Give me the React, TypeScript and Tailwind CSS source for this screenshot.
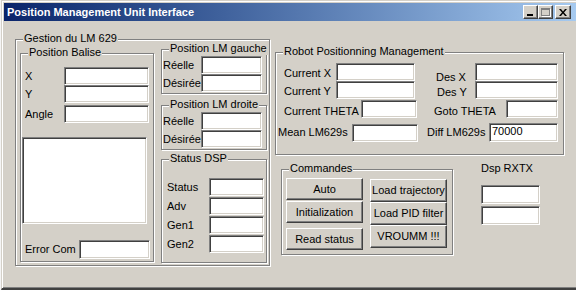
import type { ReactNode } from 'react';

// classic Win2000 dialog, MS Sans Serif approximated with Liberation Sans

function Group({ title, className, children }: { title: string; className: string; children?: ReactNode }) {
  return (
    <div className={`relative shrink-0 border border-[#808080] shadow-[inset_1px_1px_0_#fff,1px_1px_0_#fff] ${className}`}>
      <span className="absolute left-[7px] top-[-8px] bg-[#d4d0c8] px-[1px] leading-[13px] whitespace-nowrap">{title}</span>
      {children}
    </div>
  );
}

function Edit({ className, value }: { className: string; value?: string }) {
  return (
    <div
      className={`shrink-0 bg-white border border-[#808080] border-b-white border-r-white shadow-[inset_1px_1px_0_#404040,inset_-1px_-1px_0_#d4d0c8] pl-[2px] pt-[1px] leading-[13px] ${className}`}
    >
      {value}
    </div>
  );
}

function Btn({ label, className }: { label: string; className: string }) {
  return (
    <div
      className={`shrink-0 flex items-center justify-center bg-[#d4d0c8] border border-white border-b-[#404040] border-r-[#404040] shadow-[inset_-1px_-1px_0_#808080] leading-[13px] ${className}`}
    >
      {label}
    </div>
  );
}

function CapButton({ children, className }: { children: ReactNode; className: string }) {
  return (
    <div
      className={`flex items-center justify-center h-[14px] bg-[#d4d0c8] border border-white border-b-[#404040] border-r-[#404040] shadow-[inset_-1px_-1px_0_#808080] ${className}`}
    >
      {children}
    </div>
  );
}

export default function App() {
  return (
    <div className="flex w-[576px] h-[290px] overflow-hidden bg-[#f4f4f4] text-black text-[11px] font-['Liberation_Sans',Arial,sans-serif]">
      <div className="w-[1px] shrink-0" />
      <div className="w-[575px] h-[290px] shrink-0 bg-[#d4d0c8] border-t border-l border-[#d4d0c8] border-b-2 border-b-[#404040] shadow-[inset_1px_1px_0_#fff,inset_0_-1px_0_#808080] pl-[2px] pt-[2px] flex flex-col">
        {/* title bar */}
        <div className="h-[18px] flex items-center bg-gradient-to-r from-[#0a246a] to-[#a6caf0] pl-[3px] pr-[5px]">
          <span className="text-white font-bold leading-[13px] whitespace-nowrap">Position Management Unit Interface</span>
          <div className="ml-auto flex items-center">
            <CapButton className="w-[15px]">
              <div className="w-[6px] h-[2px] bg-black mt-[5px] mr-[1px]" />
            </CapButton>
            <CapButton className="w-[15px]">
              <div className="w-[9px] h-[8px] border border-[#808080] border-t-2 shadow-[1px_1px_0_#fff]" />
            </CapButton>
            <CapButton className="w-[16px] ml-[2px]">
              <svg width="8" height="7" viewBox="0 0 8 7">
                <path d="M0 0h2l2 2.5L6 0h2L5 3.5 8 7H6L4 4.5 2 7H0l3-3.5z" fill="#000" />
              </svg>
            </CapButton>
          </div>
        </div>

        {/* body */}
        <div className="flex items-start pl-[11px] pt-[18px]">
          <Group title="Gestion du LM 629" className="w-[255px] h-[227px]">
            <div className="flex items-start pl-[4px] pt-[9px]">
              <Group title="Position Balise" className="mt-[4px] w-[134px] h-[209px]">
                <div className="flex flex-col pt-[13px]">
                  <div className="flex items-center h-[18px] pl-[4px]">
                    <span className="w-[39px]">X</span>
                    <Edit className="w-[85px] h-[18px]" />
                  </div>
                  <div className="flex items-center h-[18px] pl-[4px]">
                    <span className="w-[39px]">Y</span>
                    <Edit className="w-[85px] h-[18px]" />
                  </div>
                  <div className="flex items-center h-[18px] mt-[2px] pl-[4px]">
                    <span className="w-[39px]">Angle</span>
                    <Edit className="w-[85px] h-[18px]" />
                  </div>
                  <Edit className="ml-[1px] mt-[14px] w-[125px] h-[87px]" />
                  <div className="flex items-center h-[19px] mt-[16px] pl-[4px]">
                    <span className="w-[54px] whitespace-nowrap">Error Com</span>
                    <Edit className="w-[71px] h-[19px]" />
                  </div>
                </div>
              </Group>

              <div className="ml-[7px] flex flex-col w-[106px]">
                <Group title="Position LM gauche" className="w-[106px] h-[45px]">
                  <div className="flex flex-col pt-[6px] pl-[1px]">
                    <div className="flex items-center h-[18px]">
                      <span className="w-[38px]">Réelle</span>
                      <Edit className="w-[61px] h-[18px]" />
                    </div>
                    <div className="flex items-center h-[18px]">
                      <span className="w-[38px]">Désirée</span>
                      <Edit className="w-[61px] h-[18px]" />
                    </div>
                  </div>
                </Group>
                <Group title="Position LM droite" className="mt-[11px] w-[106px] h-[45px]">
                  <div className="flex flex-col pt-[6px] pl-[1px]">
                    <div className="flex items-center h-[18px]">
                      <span className="w-[38px]">Réelle</span>
                      <Edit className="w-[61px] h-[18px]" />
                    </div>
                    <div className="flex items-center h-[18px]">
                      <span className="w-[38px]">Désirée</span>
                      <Edit className="w-[61px] h-[18px]" />
                    </div>
                  </div>
                </Group>
                <Group title="Status DSP" className="mt-[9px] w-[106px] h-[104px]">
                  <div className="flex flex-col gap-[1px] pt-[18px] pl-[5px]">
                    {['Status', 'Adv', 'Gen1', 'Gen2'].map((l) => (
                      <div key={l} className="flex items-center h-[18px]">
                        <span className="w-[42px]">{l}</span>
                        <Edit className="w-[55px] h-[18px]" />
                      </div>
                    ))}
                  </div>
                </Group>
              </div>
            </div>
          </Group>

          <div className="ml-[5px] mt-[13px] flex flex-col">
            <Group title="Robot Positionning Management" className="w-[289px] h-[103px]">
              <div className="flex flex-col pt-[10px]">
                <div className="flex items-start h-[18px] pl-[8px]">
                  <span className="w-[52px] mt-[2px]">Current X</span>
                  <Edit className="w-[79px] h-[18px]" />
                  <span className="ml-[21px] w-[39px] mt-[6px]">Des X</span>
                  <Edit className="w-[83px] h-[18px]" />
                </div>
                <div className="flex items-start h-[18px] pl-[8px]">
                  <span className="w-[52px] mt-[2px]">Current Y</span>
                  <Edit className="w-[79px] h-[18px]" />
                  <span className="ml-[22px] w-[38px] mt-[3px]">Des Y</span>
                  <Edit className="w-[83px] h-[18px]" />
                </div>
                <div className="flex items-start h-[18px] mt-[1px] pl-[8px]">
                  <span className="w-[77px] mt-[3px] whitespace-nowrap">Current THETA</span>
                  <Edit className="w-[56px] h-[18px]" />
                  <span className="ml-[17px] w-[72px] mt-[3px] whitespace-nowrap">Goto THETA</span>
                  <Edit className="w-[52px] h-[18px]" />
                </div>
                <div className="flex items-center h-[19px] mt-[5px] pl-[2px]">
                  <span className="w-[74px] whitespace-nowrap">Mean LM629s</span>
                  <Edit className="w-[66px] h-[18px] mt-[1px]" />
                  <span className="ml-[9px] w-[62px] whitespace-nowrap">Diff LM629s</span>
                  <Edit className="w-[69px] h-[19px]" value="70000" />
                </div>
              </div>
            </Group>

            <div className="flex items-start mt-[7px] ml-[6px]">
              <Group title="Commandes" className="mt-[7px] w-[172px] h-[86px]">
                <div className="flex items-start pl-[4px] pt-[8px]">
                  <div className="flex flex-col">
                    <Btn label="Auto" className="w-[77px] h-[22px]" />
                    <Btn label="Initialization" className="w-[77px] h-[22px] mt-[1px]" />
                    <Btn label="Read status" className="w-[77px] h-[22px] mt-[5px]" />
                  </div>
                  <div className="flex flex-col ml-[7px] mt-[1px]">
                    <Btn label="Load trajectory" className="w-[77px] h-[23px]" />
                    <Btn label="Load PID filter" className="w-[77px] h-[23px]" />
                    <Btn label="VROUMM !!!" className="w-[77px] h-[23px]" />
                  </div>
                </div>
              </Group>
              <div className="ml-[28px] flex flex-col">
                <span className="leading-[13px]">Dsp RXTX</span>
                <Edit className="w-[59px] h-[19px] mt-[10px]" />
                <Edit className="w-[59px] h-[19px] mt-[2px]" />
              </div>
            </div>
          </div>
        </div>
      </div>
    </div>
  );
}
